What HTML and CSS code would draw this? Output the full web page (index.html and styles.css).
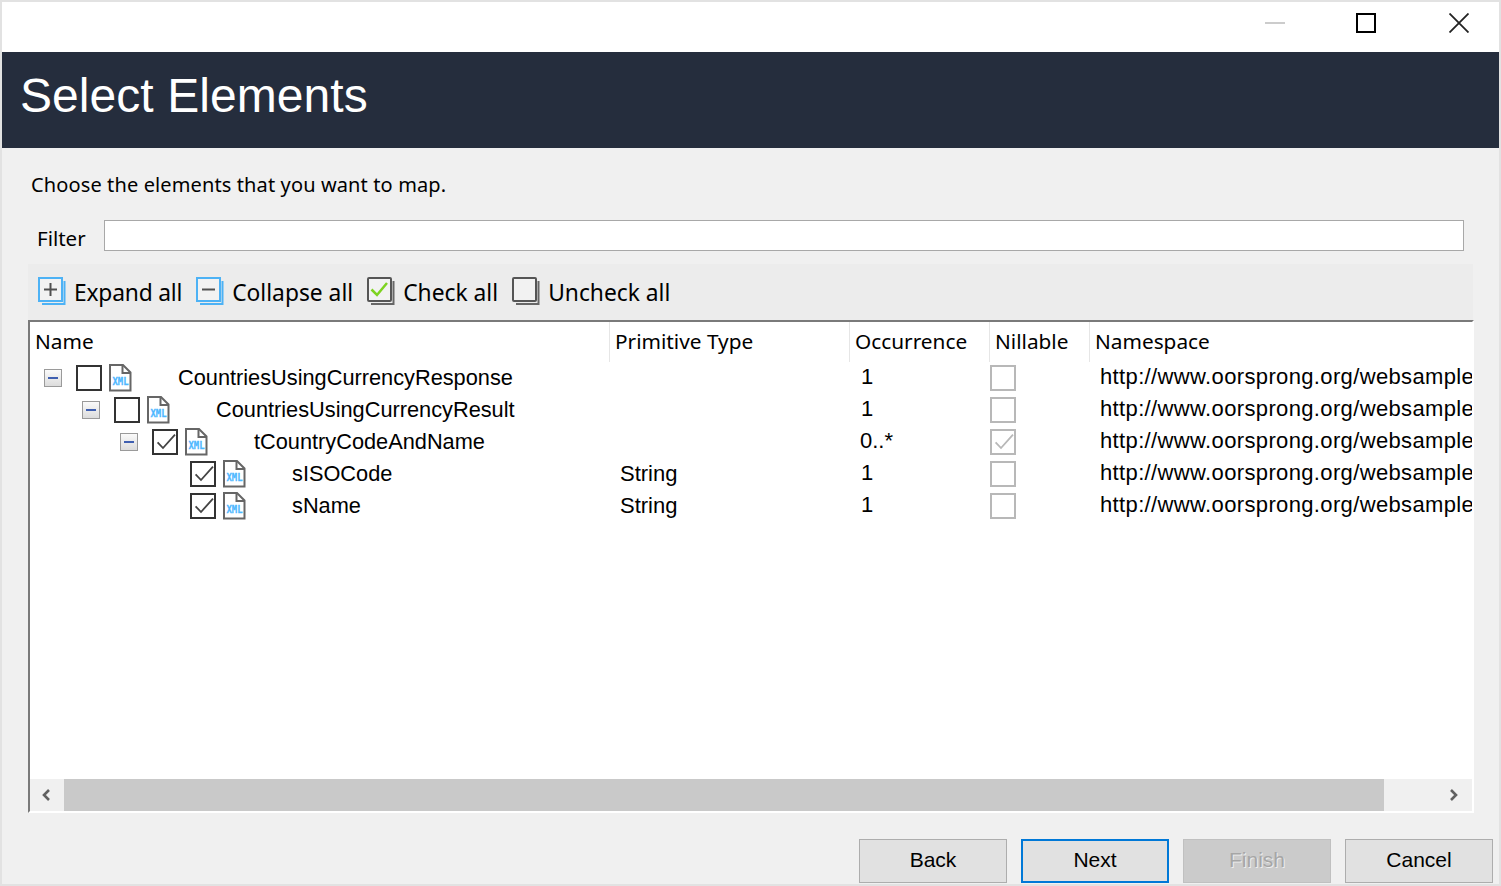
FILE: index.html
```html
<!DOCTYPE html>
<html lang="en">

<head>
    <meta charset="UTF-8">
    <title>Select Elements</title>
    <link rel="stylesheet" href="styles.css">
</head>

<body>
    <svg class="defs" width="0" height="0">
        <defs>
            <symbol id="xml-file" viewBox="0 0 24 28">
                <path d="M2 1H15L22.500 8.500V26.500H2Z" fill="#fff" stroke="#666" stroke-width="2" />
                <path d="M14.500 1V9H22.500" fill="none" stroke="#666" stroke-width="2" />
                <text x="12.500" y="20.500" class="xml-text" textLength="16" lengthAdjust="spacingAndGlyphs">XML</text>
            </symbol>
            <symbol id="tick" viewBox="0 0 22 22">
                <path d="M3.600 11.300L9 17L21 3.700" fill="none" stroke="currentColor" stroke-width="1.800" />
            </symbol>
        </defs>
    </svg>

    <div class="window">
        <div class="titlebar">
            <svg class="win-btn btn-min" width="20" height="20" viewBox="0 0 20 20">
                <path d="M0 10H20" stroke="#ccc" stroke-width="2" />
            </svg>
            <svg class="win-btn btn-max" width="20" height="20" viewBox="0 0 20 20">
                <rect x="1" y="1" width="18" height="18" fill="none" stroke="#000" stroke-width="2" />
            </svg>
            <svg class="win-btn btn-close" width="20" height="20" viewBox="0 0 20 20">
                <path d="M0.500 0.500L19.500 19.500M19.500 0.500L0.500 19.500" stroke="#222" stroke-width="1.800" />
            </svg>
        </div>

        <div class="header">
            <h1>Select Elements</h1>
        </div>

        <div class="content">
            <p class="intro">Choose the elements that you want to map.</p>

            <div class="filter">
                <label>Filter</label>
                <input type="text" class="filter-input">
            </div>

            <div class="toolbar">
                <div class="tool tool-expand">
                    <svg width="28" height="28" viewBox="0 0 28 28">
                        <path d="M26.500 4V27H4" fill="none" stroke="#4db2f5" stroke-width="2" />
                        <rect x="1" y="1" width="23" height="23" fill="#f2f2f2" stroke="#4db2f5" stroke-width="2" />
                        <path d="M12.500 6V19M6 12.500H19" stroke="#505050" stroke-width="2" />
                    </svg>
                    <span>Expand all</span>
                </div>
                <div class="tool tool-collapse">
                    <svg width="28" height="28" viewBox="0 0 28 28">
                        <path d="M26.500 4V27H4" fill="none" stroke="#4db2f5" stroke-width="2" />
                        <rect x="1" y="1" width="23" height="23" fill="#f2f2f2" stroke="#4db2f5" stroke-width="2" />
                        <path d="M6 12.500H19" stroke="#505050" stroke-width="2" />
                    </svg>
                    <span>Collapse all</span>
                </div>
                <div class="tool tool-check">
                    <svg width="28" height="28" viewBox="0 0 28 28">
                        <path d="M26.500 4V27H4" fill="none" stroke="#666" stroke-width="2" />
                        <rect x="1" y="1" width="23" height="23" rx="1" fill="#f2f2f2" stroke="#555" stroke-width="2" />
                        <path d="M4.500 12.500L10 18L20 6" fill="none" stroke="#7ed321" stroke-width="2.500" />
                    </svg>
                    <span>Check all</span>
                </div>
                <div class="tool tool-uncheck">
                    <svg width="28" height="28" viewBox="0 0 28 28">
                        <path d="M26.500 4V27H4" fill="none" stroke="#666" stroke-width="2" />
                        <rect x="1" y="1" width="23" height="23" rx="1" fill="#f2f2f2" stroke="#555" stroke-width="2" />
                    </svg>
                    <span>Uncheck all</span>
                </div>
            </div>

            <div class="grid-frame">
                <div class="grid-row grid-head">
                    <div class="head-cell">Name</div>
                    <div class="head-cell">Primitive Type</div>
                    <div class="head-cell">Occurrence</div>
                    <div class="head-cell">Nillable</div>
                    <div class="head-cell last">Namespace</div>
                </div>

                <div class="grid-body">
                    <div class="grid-row">
                        <div class="name-cell level-0">
                            <span class="toggle"></span>
                            <span class="check"></span>
                            <svg class="file-icon"><use href="#xml-file" /></svg>
                            <span class="name">CountriesUsingCurrencyResponse</span>
                        </div>
                        <div class="cell"></div>
                        <div class="cell occ">1</div>
                        <div class="cell nil"><span class="check off"></span></div>
                        <div class="cell ns">http://www.oorsprong.org/websample</div>
                    </div>
                    <div class="grid-row">
                        <div class="name-cell level-1">
                            <span class="toggle"></span>
                            <span class="check"></span>
                            <svg class="file-icon"><use href="#xml-file" /></svg>
                            <span class="name">CountriesUsingCurrencyResult</span>
                        </div>
                        <div class="cell"></div>
                        <div class="cell occ">1</div>
                        <div class="cell nil"><span class="check off"></span></div>
                        <div class="cell ns">http://www.oorsprong.org/websample</div>
                    </div>
                    <div class="grid-row">
                        <div class="name-cell level-2">
                            <span class="toggle"></span>
                            <span class="check"><svg class="tick"><use href="#tick" /></svg></span>
                            <svg class="file-icon"><use href="#xml-file" /></svg>
                            <span class="name">tCountryCodeAndName</span>
                        </div>
                        <div class="cell"></div>
                        <div class="cell occ many">0..*</div>
                        <div class="cell nil"><span class="check off"><svg class="tick"><use href="#tick" /></svg></span></div>
                        <div class="cell ns">http://www.oorsprong.org/websample</div>
                    </div>
                    <div class="grid-row">
                        <div class="name-cell level-3">
                            <span class="toggle-space"></span>
                            <span class="check"><svg class="tick"><use href="#tick" /></svg></span>
                            <svg class="file-icon"><use href="#xml-file" /></svg>
                            <span class="name">sISOCode</span>
                        </div>
                        <div class="cell type">String</div>
                        <div class="cell occ">1</div>
                        <div class="cell nil"><span class="check off"></span></div>
                        <div class="cell ns">http://www.oorsprong.org/websample</div>
                    </div>
                    <div class="grid-row">
                        <div class="name-cell level-3">
                            <span class="toggle-space"></span>
                            <span class="check"><svg class="tick"><use href="#tick" /></svg></span>
                            <svg class="file-icon"><use href="#xml-file" /></svg>
                            <span class="name">sName</span>
                        </div>
                        <div class="cell type">String</div>
                        <div class="cell occ">1</div>
                        <div class="cell nil"><span class="check off"></span></div>
                        <div class="cell ns">http://www.oorsprong.org/websample</div>
                    </div>
                </div>

                <div class="scrollbar">
                    <div class="arrow">
                        <svg width="10" height="12" viewBox="0 0 10 12"><path d="M8 1L3 6L8 11" fill="none" stroke="#606060" stroke-width="2.600" /></svg>
                    </div>
                    <div class="thumb"></div>
                    <div class="arrow arrow-right">
                        <svg width="10" height="12" viewBox="0 0 10 12"><path d="M2 1L7 6L2 11" fill="none" stroke="#606060" stroke-width="2.600" /></svg>
                    </div>
                </div>
            </div>

            <div class="footer">
                <button class="btn">Back</button>
                <button class="btn btn-default">Next</button>
                <button class="btn btn-disabled">Finish</button>
                <button class="btn">Cancel</button>
            </div>
        </div>
    </div>
</body>

</html>
```

FILE: styles.css
```css
html,
body {
    margin: 0;
    padding: 0;
}

body {
    width: 1501px;
    height: 886px;
    overflow: hidden;
    font-family: "Liberation Sans", Arial, sans-serif;
    color: #000;
}

.defs {
    display: block;
    height: 0;
}

.xml-text {
    font-family: "DejaVu Sans Mono", monospace;
    font-size: 10px;
    font-weight: bold;
    fill: #4db8ff;
    stroke: #4db8ff;
    stroke-width: 0.300px;
    text-anchor: middle;
}

.window {
    box-sizing: border-box;
    width: 1501px;
    height: 886px;
    border: 2px solid #e2e2e2;
    display: flex;
    flex-direction: column;
    background-color: #f0f0f0;
}

.titlebar {
    height: 50px;
    background-color: #fff;
    display: flex;
    justify-content: flex-end;
    padding: 11px 30px 0 0;
    box-sizing: border-box;
}

.btn-max {
    margin-left: 71px;
}

.btn-close {
    margin-left: 73px;
}

.header {
    box-sizing: border-box;
    height: 96px;
    background-color: #252d3d;
    display: flex;
    align-items: center;
    padding: 0 0 10px 18px;
}

.header h1 {
    margin: 0;
    font-size: 48px;
    font-weight: normal;
    letter-spacing: 0.060px;
    color: #fff;
}

.content {
    flex: 1;
    display: flex;
    flex-direction: column;
    min-height: 0;
}

.intro {
    margin: 24px 0 0 29px;
    height: 26px;
    line-height: 26px;
    font-family: "Noto Sans", sans-serif;
    font-size: 20px;
    letter-spacing: 0.120px;
}

.filter {
    display: flex;
    align-items: center;
    height: 31px;
    margin: 22px 0 0 35px;
}

.filter label {
    width: 67px;
    padding-top: 4px;
    font-family: "Noto Sans", sans-serif;
    font-size: 20.500px;
}

.filter-input {
    box-sizing: border-box;
    width: 1360px;
    height: 31px;
    border: 1px solid #a8a8a8;
    background-color: #fff;
    margin: 0;
}

.toolbar {
    box-sizing: border-box;
    height: 56px;
    width: 1445px;
    margin: 13px 0 0 26px;
    padding: 12px 0 0 10px;
    background-color: #ececec;
    display: flex;
}

.tool {
    display: flex;
    align-items: center;
    height: 30px;
    font-family: "Noto Sans", sans-serif;
    font-size: 22.800px;
}

.tool svg {
    margin-right: 8px;
}

.tool span {
    padding-top: 2px;
}

.tool-expand span {
    letter-spacing: -0.200px;
}

.tool-collapse {
    margin-left: 14px;
}

.tool-check {
    margin-left: 14px;
}

.tool-uncheck {
    margin-left: 14px;
}

.grid-frame {
    box-sizing: border-box;
    width: 1446px;
    height: 493px;
    margin-left: 26px;
    background-color: #fff;
    border-top: 2px solid #7a7a7a;
    border-left: 2px solid #7a7a7a;
    border-right: 2px solid #fff;
    border-bottom: 2px solid #fff;
    display: flex;
    flex-direction: column;
}

.grid-row {
    display: grid;
    grid-template-columns: 580px 240px 140px 100px 382px;
    height: 32px;
    overflow: hidden;
}

.grid-head {
    height: 40px;
}

.head-cell {
    box-sizing: border-box;
    padding-left: 5px;
    border-right: 1px solid #e6e6e6;
    line-height: 38px;
    font-family: "Noto Sans", sans-serif;
    font-size: 20.800px;
    white-space: nowrap;
}

.head-cell.last {
    border-right: none;
}

.grid-body {
    flex: 1;
}

.name-cell {
    display: flex;
    align-items: center;
    font-size: 21.750px;
    white-space: nowrap;
}

.level-0 {
    padding-left: 14px;
}

.level-1 {
    padding-left: 52px;
}

.level-2 {
    padding-left: 90px;
}

.level-3 {
    padding-left: 128px;
}

.toggle,
.toggle-space {
    box-sizing: border-box;
    width: 18px;
    height: 18px;
    margin-right: 14px;
    flex: none;
}

.toggle {
    border: 1px solid #9a9a9a;
    background: linear-gradient(#fafafa, #dcdcdc);
    display: flex;
    align-items: center;
    justify-content: center;
}

.toggle::before {
    content: "";
    width: 10px;
    height: 2px;
    background-color: #3f5fb0;
}

.check {
    box-sizing: border-box;
    display: block;
    width: 26px;
    height: 26px;
    border: 2px solid #333;
    background-color: #fff;
    color: #444;
    flex: none;
}

.check.off {
    border-color: #b8b8b8;
    color: #b8b8b8;
}

.tick {
    display: block;
    width: 22px;
    height: 22px;
}

.file-icon {
    width: 24px;
    height: 28px;
    margin: 0 46px 0 6px;
    flex: none;
}

.cell {
    box-sizing: border-box;
    display: flex;
    align-items: center;
    font-size: 22px;
    white-space: nowrap;
    overflow: hidden;
}

.type,
.ns {
    padding-left: 10px;
}

.occ {
    padding: 0 0 2px 11px;
}

.occ.many {
    padding-left: 10px;
}

.ns {
    letter-spacing: 0.360px;
    padding-bottom: 2px;
}

.scrollbar {
    height: 32px;
    background-color: #f0f0f0;
    display: flex;
    flex: none;
}

.arrow {
    width: 34px;
    display: flex;
    align-items: center;
    justify-content: center;
    padding-right: 2px;
    box-sizing: border-box;
}

.arrow-right {
    flex: 1;
    padding: 0 0 0 52px;
}

.thumb {
    width: 1320px;
    background-color: #c9c9c9;
}

.footer {
    display: flex;
    justify-content: flex-end;
    gap: 14px;
    padding-right: 6px;
    margin-top: 26px;
}

.btn {
    box-sizing: border-box;
    width: 148px;
    height: 44px;
    border: 1px solid #adadad;
    background-color: #e1e1e1;
    font-family: "Liberation Sans", Arial, sans-serif;
    font-size: 21px;
    color: #000;
    padding: 0 0 2px;
}

.btn-default {
    border: 2px solid #0078d7;
}

.btn-disabled {
    background-color: #cbcbcb;
    border-color: #c0c0c0;
    color: #a6a6a6;
    text-shadow: 1px 1px 0 #eee;
}
```
